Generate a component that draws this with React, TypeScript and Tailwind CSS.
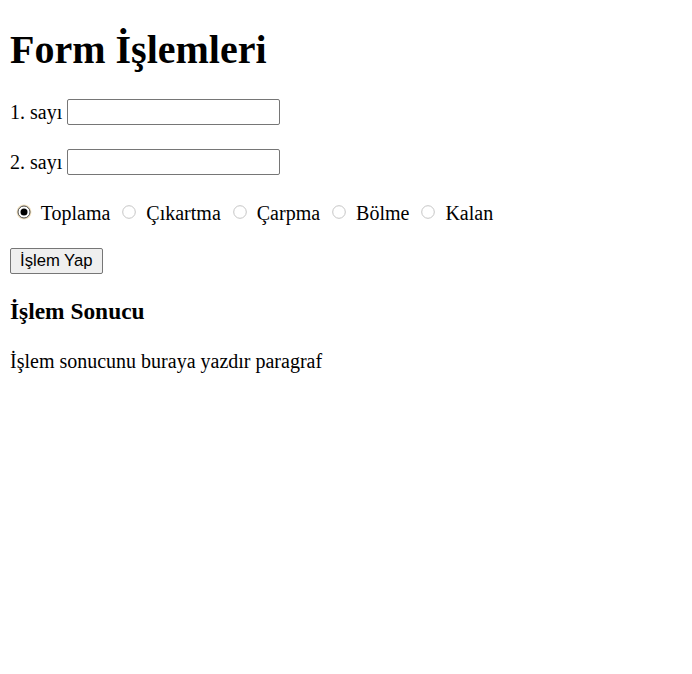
import { useState } from "react";

const OPS = ["Toplama", "Çıkartma", "Çarpma", "Bölme", "Kalan"];

function Radio({ checked }: { checked: boolean }) {
  return (
    <svg width="16" height="16" viewBox="0 0 16 16" className="inline ml-[6px] mr-[4px] align-[0px]">
      {checked ? (
        <>
          <circle cx="8" cy="8" r="7.5" fill="#f3e3c3" />
          <circle cx="8" cy="8" r="6" fill="#fff" stroke="#4a4a4a" strokeWidth="1" />
          <circle cx="8" cy="8" r="3.5" fill="#000" />
        </>
      ) : (
        <circle cx="8" cy="8" r="6.3" fill="#fff" stroke="#c6c6c6" strokeWidth="1" />
      )}
    </svg>
  );
}

function NumberRow({ label }: { label: string }) {
  return (
    <div className="flex items-center gap-[5px] h-[26px]">
      <span>{label}</span>
      <input
        type="text"
        className="w-[213px] h-[26px] border border-[#767676] rounded-[2px] px-[2px] font-['Liberation_Sans',sans-serif] text-[16.67px] outline-none bg-white"
      />
    </div>
  );
}

export default function App() {
  const [op] = useState("Toplama");

  return (
    <div className="px-[10px] pt-[27px] font-['Liberation_Serif',serif] text-[20px] leading-[23px] text-black bg-white min-h-[674px]">
      <h1 className="text-[40px] font-bold leading-[46px] mb-[26px]">Form İşlemleri</h1>

      <div className="mb-[24px]">
        <NumberRow label="1. sayı" />
      </div>
      <NumberRow label="2. sayı" />

      <div className="mt-[27px] h-[23px] whitespace-pre">
        {OPS.map((o) => (
          <span key={o}>
            <Radio checked={o === op} />
            {" " + o + " "}
          </span>
        ))}
      </div>

      <div className="mt-[23px]">
        <button className="h-[26px] px-[9px] border border-[#767676] rounded-[2px] bg-[#efefef] font-['Liberation_Sans',sans-serif] text-[16.67px] leading-none">
          İşlem Yap
        </button>
      </div>

      <h3 className="mt-[23.5px] text-[23.4px] font-bold leading-[27px]">İşlem Sonucu</h3>

      <p className="mt-[25px]">İşlem sonucunu buraya yazdır paragraf</p>
    </div>
  );
}
